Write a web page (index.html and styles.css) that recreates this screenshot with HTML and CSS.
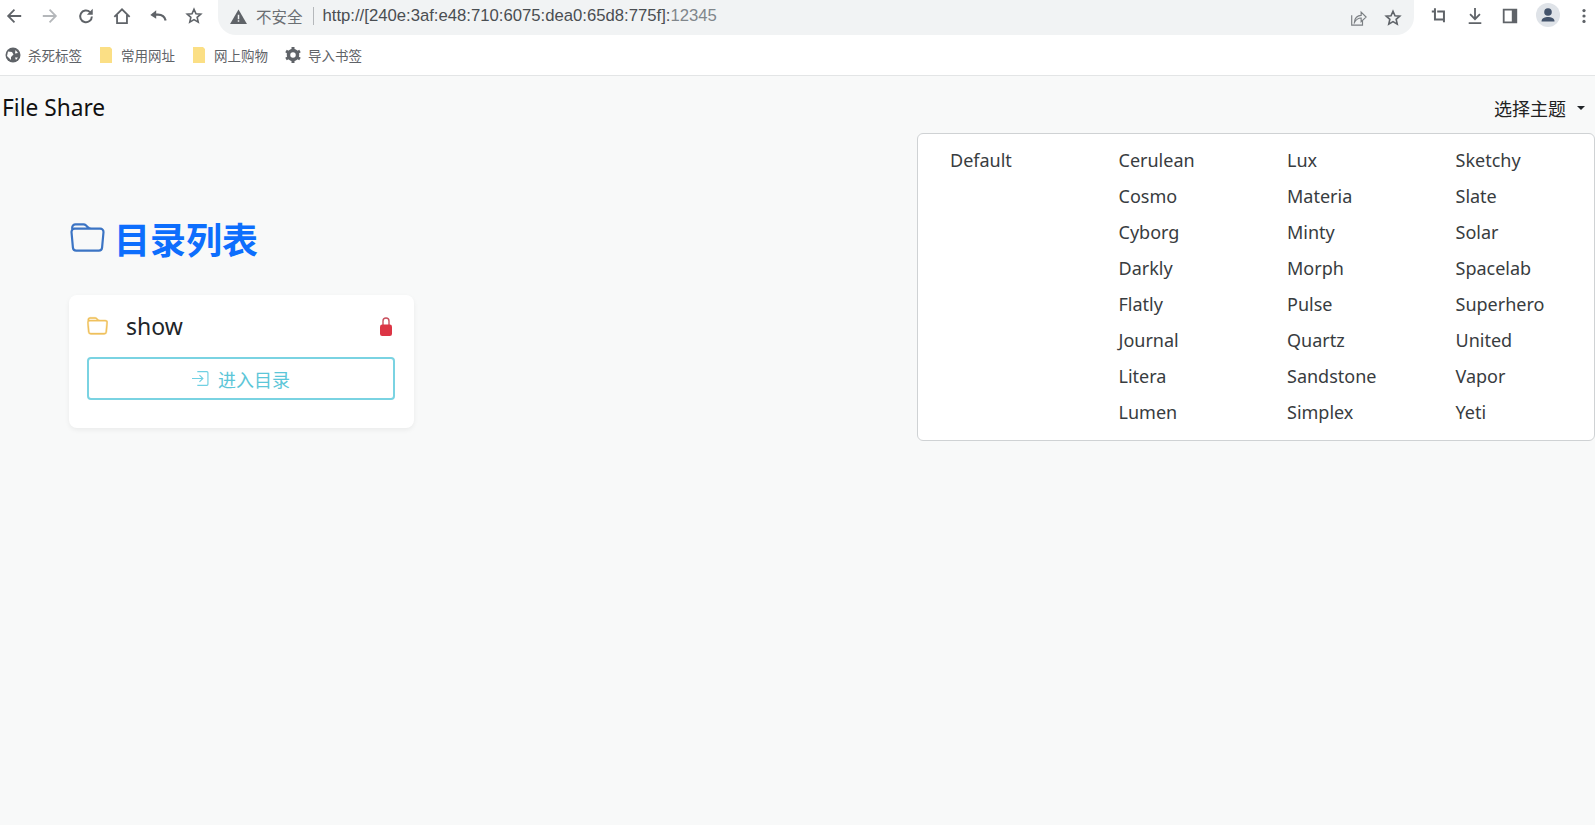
FILE: index.html
```html
<!DOCTYPE html>
<html lang="zh-CN">
<head>
<meta charset="utf-8">
<title>File Share</title>
<link rel="stylesheet" href="styles.css">
</head>
<body>
<header class="chrome">
  <div class="toolbar">
    <div class="nav-icons">
      <svg class="ico" viewBox="0 0 20 20"><path d="M18 10H4M10.500 3 3.500 10l7 7" fill="none" stroke="#5f6368" stroke-width="2"/></svg>
      <svg class="ico" viewBox="0 0 20 20"><path d="M2 10h14M9.500 3l7 7-7 7" fill="none" stroke="#b4b7ba" stroke-width="2"/></svg>
      <svg class="ico" viewBox="0 0 20 20"><path d="M16.500 10.500a6.500 6.500 0 1 1-2-4.800" fill="none" stroke="#5f6368" stroke-width="2.200"/><path d="M17.500 2v6.500H11z" fill="#5f6368"/></svg>
      <svg class="ico" viewBox="0 0 20 20"><path d="M1.500 11 10 2.500l8.500 8.500M4.500 9v9h11V9" fill="none" stroke="#5f6368" stroke-width="2"/></svg>
      <svg class="ico" viewBox="0 0 20 20"><path d="M18.500 15c-1-4-4-6.500-8.500-6.500H4" fill="none" stroke="#5f6368" stroke-width="2.400"/><path d="M8 3.500 1.500 9 8 13z" fill="#5f6368"/></svg>
      <svg class="ico" viewBox="0 0 20 20"><path d="m10 2.500 2.200 5 5.300.5-4 3.500 1.200 5.300L10 14l-4.700 2.800 1.200-5.300-4-3.500 5.300-.5z" fill="none" stroke="#5f6368" stroke-width="1.800"/></svg>
    </div>
    <div class="omnibox">
      <svg class="warn" viewBox="0 0 18 16"><path d="M9 .5 18 16H0z" fill="#5f6368"/><path d="M8.200 6h1.600v5H8.200zM8.200 12h1.600v1.700H8.200z" fill="#f1f3f4"/></svg>
      <span class="insecure">不安全</span>
      <span class="sep"></span>
      <span class="url">http://[240e:3af:e48:710:6075:dea0:65d8:775f]:<span class="port">12345</span></span>
      <span class="omni-right">
        <svg class="ico" viewBox="0 0 20 20"><path d="M3 7v11h12v-5" fill="none" stroke="#7b7f83" stroke-width="1.300"/><path d="M6 15c0-5 3.500-8 7.500-8V3.500L19 9l-5.500 5v-4C10.500 10 8 11.500 6 15z" fill="none" stroke="#7b7f83" stroke-width="1.300"/></svg>
        <svg class="ico" viewBox="0 0 20 20"><path d="m10 2.500 2.200 5 5.300.5-4 3.500 1.200 5.300L10 14l-4.700 2.800 1.200-5.300-4-3.500 5.300-.5z" fill="none" stroke="#5f6368" stroke-width="1.800"/></svg>
      </span>
    </div>
    <div class="ext-icons">
      <svg class="ico" viewBox="0 0 20 20"><path d="M2 5h3.500M5.500 1.500V14H15M8 5h7.500v12" fill="none" stroke="#5f6368" stroke-width="2.200"/></svg>
      <svg class="ico" viewBox="0 0 20 20"><path d="M10 1v12.500M4.500 8l5.500 5.500L15.500 8M3 18h14" fill="none" stroke="#5f6368" stroke-width="2"/></svg>
      <svg class="ico" viewBox="0 0 20 20"><path d="M3 3h14v14H3z" fill="none" stroke="#5f6368" stroke-width="2"/><path d="M12 3h5v14h-5z" fill="#5f6368"/></svg>
      <span class="avatar"><svg viewBox="0 0 24 24"><circle cx="12" cy="9" r="3.800" fill="#43536b"/><path d="M5.500 18.500c0-3.500 3.500-4.500 6.500-4.500s6.500 1 6.500 4.500z" fill="#43536b"/></svg></span>
      <svg class="ico menu" viewBox="0 0 6 20"><circle cx="3" cy="4" r="1.800" fill="#5f6368"/><circle cx="3" cy="10" r="1.800" fill="#5f6368"/><circle cx="3" cy="16" r="1.800" fill="#5f6368"/></svg>
    </div>
  </div>
  <div class="bookmarks">
    <span class="mark"><svg class="mark-ico" viewBox="0 0 16 16"><circle cx="8" cy="8" r="7.500" fill="#5f6368"/><path d="M3 4.500l4 .5 1.500 2.500L6 10v3L2 9zM10.500 3l2.500 3-3 .5zM10 10.500h3l-2 2.500z" fill="#fff"/></svg>杀死标签</span>
    <span class="mark"><svg class="mark-ico folder" viewBox="0 0 14 16"><path d="M1 0h10l2 2v14H1z" fill="#fbdf85"/></svg>常用网址</span>
    <span class="mark"><svg class="mark-ico folder" viewBox="0 0 14 16"><path d="M1 0h10l2 2v14H1z" fill="#fbdf85"/></svg>网上购物</span>
    <span class="mark"><svg class="mark-ico" viewBox="0 0 16 16"><circle cx="8" cy="8" r="4.500" fill="none" stroke="#5f6368" stroke-width="3.500"/><path d="M8 0v3M8 13v3M1 4l2.600 1.500M12.400 10.500 15 12M1 12l2.600-1.500M12.400 5.500 15 4" stroke="#5f6368" stroke-width="3"/></svg>导入书签</span>
  </div>
</header>

<main class="page">
  <nav class="topnav">
    <span class="brand">File Share</span>
    <span class="theme-toggle">选择主题<span class="caret"></span></span>
  </nav>
  <div class="theme-menu">
    <div class="theme-col"><a>Default</a></div>
    <div class="theme-col"><a>Cerulean</a><a>Cosmo</a><a>Cyborg</a><a>Darkly</a><a>Flatly</a><a>Journal</a><a>Litera</a><a>Lumen</a></div>
    <div class="theme-col"><a>Lux</a><a>Materia</a><a>Minty</a><a>Morph</a><a>Pulse</a><a>Quartz</a><a>Sandstone</a><a>Simplex</a></div>
    <div class="theme-col"><a>Sketchy</a><a>Slate</a><a>Solar</a><a>Spacelab</a><a>Superhero</a><a>United</a><a>Vapor</a><a>Yeti</a></div>
  </div>
  <section class="content">
    <h1 class="title">
      <svg class="title-ico" viewBox="0 0 16 16"><path d="M.54 3.870.5 3a2 2 0 0 1 2-2h3.672a2 2 0 0 1 1.414.586l.828.828A2 2 0 0 0 9.828 3h3.982a2 2 0 0 1 1.992 2.181l-.637 7A2 2 0 0 1 13.174 14H2.826a2 2 0 0 1-1.991-1.819l-.637-7a2 2 0 0 1 .342-1.310zM2.190 4a1 1 0 0 0-.996 1.090l.637 7a1 1 0 0 0 .995.910h10.348a1 1 0 0 0 .995-.910l.637-7A1 1 0 0 0 13.810 4H2.190zm4.690-1.707A1 1 0 0 0 6.172 2H2.500a1 1 0 0 0-1 .981l.006.139C1.720 3.042 1.950 3 2.190 3h5.396l-.707-.707z" fill="#3b74c4"/></svg>目录列表
    </h1>
    <article class="card">
      <div class="card-head">
        <svg class="card-folder" viewBox="0 0 16 16"><path d="M.54 3.870.5 3a2 2 0 0 1 2-2h3.672a2 2 0 0 1 1.414.586l.828.828A2 2 0 0 0 9.828 3h3.982a2 2 0 0 1 1.992 2.181l-.637 7A2 2 0 0 1 13.174 14H2.826a2 2 0 0 1-1.991-1.819l-.637-7a2 2 0 0 1 .342-1.310zM2.190 4a1 1 0 0 0-.996 1.090l.637 7a1 1 0 0 0 .995.910h10.348a1 1 0 0 0 .995-.910l.637-7A1 1 0 0 0 13.810 4H2.190zm4.690-1.707A1 1 0 0 0 6.172 2H2.500a1 1 0 0 0-1 .981l.006.139C1.720 3.042 1.950 3 2.190 3h5.396l-.707-.707z" fill="#f0c25e" stroke="#f0c25e" stroke-width=".3"/></svg>
        <span class="card-name">show</span>
        <svg class="lock" viewBox="0 0 12 20"><path d="M3 10V5a3 3 0 0 1 6 0v5" fill="none" stroke="#c9505e" stroke-width="1.400"/><rect y="8.500" width="12" height="11.500" rx="2.200" fill="#dc3545"/></svg>
      </div>
      <button class="enter">
        <svg class="enter-ico" viewBox="0 0 16 16"><path d="M5 1.500h9a1 1 0 0 1 1 1v11a1 1 0 0 1-1 1H5M0 8h10M7 4.800 10.200 8 7 11.200" fill="none" stroke="#6fd0e2" stroke-width="1.100"/></svg>进入目录
      </button>
    </article>
  </section>
</main>
</body>
</html>
```
FILE: styles.css
```css
* { box-sizing: border-box; }
html, body { margin: 0; height: 100%; }
body {
  width: 1595px;
  height: 825px;
  overflow: hidden;
  background: #f8f9f9;
  font-family: "Noto Sans", "Noto Sans CJK SC", sans-serif;
  display: flex;
  flex-direction: column;
}
.chrome {
  background: #fff;
  border-bottom: 1px solid #e3e5e6;
  height: 76px;
  flex: none;
}
.toolbar {
  height: 36px;
  display: flex;
  align-items: flex-start;
}
.ico { width: 18px; height: 18px; flex: none; }
.nav-icons {
  display: flex;
  gap: 18px;
  padding: 7px 0 0 5px;
  width: 218px;
}
.omnibox {
  width: 1196px;
  height: 35px;
  background: #f1f3f4;
  border-radius: 0 0 18px 18px;
  display: flex;
  align-items: center;
  padding-left: 12px;
  padding-bottom: 3px;
  font-family: "Liberation Sans", "Noto Sans CJK SC", sans-serif;
}
.warn { width: 17px; height: 15px; margin-right: 9px; }
.insecure { font-size: 15.500px; color: #6b6f73; font-family: "Noto Sans CJK SC", sans-serif; }
.sep { width: 1px; height: 18px; background: #b5b8bb; margin: 0 9px 0 10px; }
.url { font-size: 16.700px; color: #4a4e52; }
.port { color: #80868b; }
.omni-right {
  margin-left: auto;
  display: flex;
  gap: 17px;
  padding-right: 12px;
  padding-top: 3px;
}
.ext-icons {
  flex: 1;
  display: flex;
  align-items: center;
  gap: 17.500px;
  padding: 5px 0 0 16px;
}
.avatar {
  width: 24px;
  height: 24px;
  border-radius: 50%;
  background: #dfe3e8;
  display: block;
  margin: -2px -2px 0 -1px;
}
.avatar svg { display: block; }
.menu { width: 6px; margin-left: 6px; }
.bookmarks {
  height: 39px;
  display: flex;
  align-items: center;
  padding: 0 0 2px 5px;
  font-size: 13.500px;
  color: #5f6368;
  font-family: "Noto Sans CJK SC", sans-serif;
}
.mark {
  display: flex;
  align-items: center;
  gap: 7px;
  margin-right: 17px;
}
.mark-ico { width: 16px; height: 16px; }
.folder { width: 14px; margin-right: 1px; }
.page {
  flex: 1;
  position: relative;
}
.topnav {
  display: flex;
  justify-content: space-between;
  align-items: center;
  height: 63px;
  padding: 0 10px 0 2px;
  color: #111;
}
.brand { font-size: 22.700px; }
.theme-toggle { font-size: 18px; font-family: "Noto Sans CJK SC", sans-serif; display: flex; align-items: center; color: #222; }
.caret {
  border-top: 4.800px solid #212529;
  border-left: 4.800px solid transparent;
  border-right: 4.800px solid transparent;
  margin-left: 11px;
}
.theme-menu {
  position: absolute;
  left: 917px;
  top: 57px;
  width: 678px;
  height: 308px;
  background: #fff;
  border: 1px solid #cfd2d4;
  border-radius: 6px;
  display: grid;
  grid-template-columns: repeat(4, 168.500px);
  padding: 8px 0 0 32px;
  font-size: 18px;
  color: #383c40;
}
.theme-col a {
  display: block;
  height: 36px;
  line-height: 36px;
}
.content { padding: 74px 0 0 69px; }
.title {
  margin: 0;
  display: flex;
  align-items: center;
  font-size: 36px;
  font-weight: 700;
  line-height: 50px;
  color: #0d6efd;
  font-family: "Noto Sans CJK SC", sans-serif;
}
.title-ico { width: 35px; height: 35px; margin: 0 9px 0 1px; }
.card {
  width: 345px;
  height: 133px;
  margin-top: 32px;
  background: #fff;
  border-radius: 8px;
  box-shadow: 0 2px 5px rgba(0, 0, 0, .06);
  padding: 0 19px 0 18px;
}
.card-head {
  height: 62px;
  display: flex;
  align-items: center;
}
.card-folder { width: 21px; height: 21px; }
.card-name { font-size: 23px; color: #212529; margin-left: 18px; }
.lock { width: 12px; height: 20px; margin-left: auto; margin-right: 3px; }
.enter {
  display: flex;
  align-items: center;
  justify-content: center;
  width: 100%;
  height: 43px;
  background: #fff;
  border: 2px solid #7ad3e2;
  border-radius: 4px;
  color: #5cc6d8;
  font-size: 18px;
  font-family: "Noto Sans CJK SC", sans-serif;
  padding: 0;
}
.enter-ico { width: 17px; height: 17px; margin-right: 9px; }
```
